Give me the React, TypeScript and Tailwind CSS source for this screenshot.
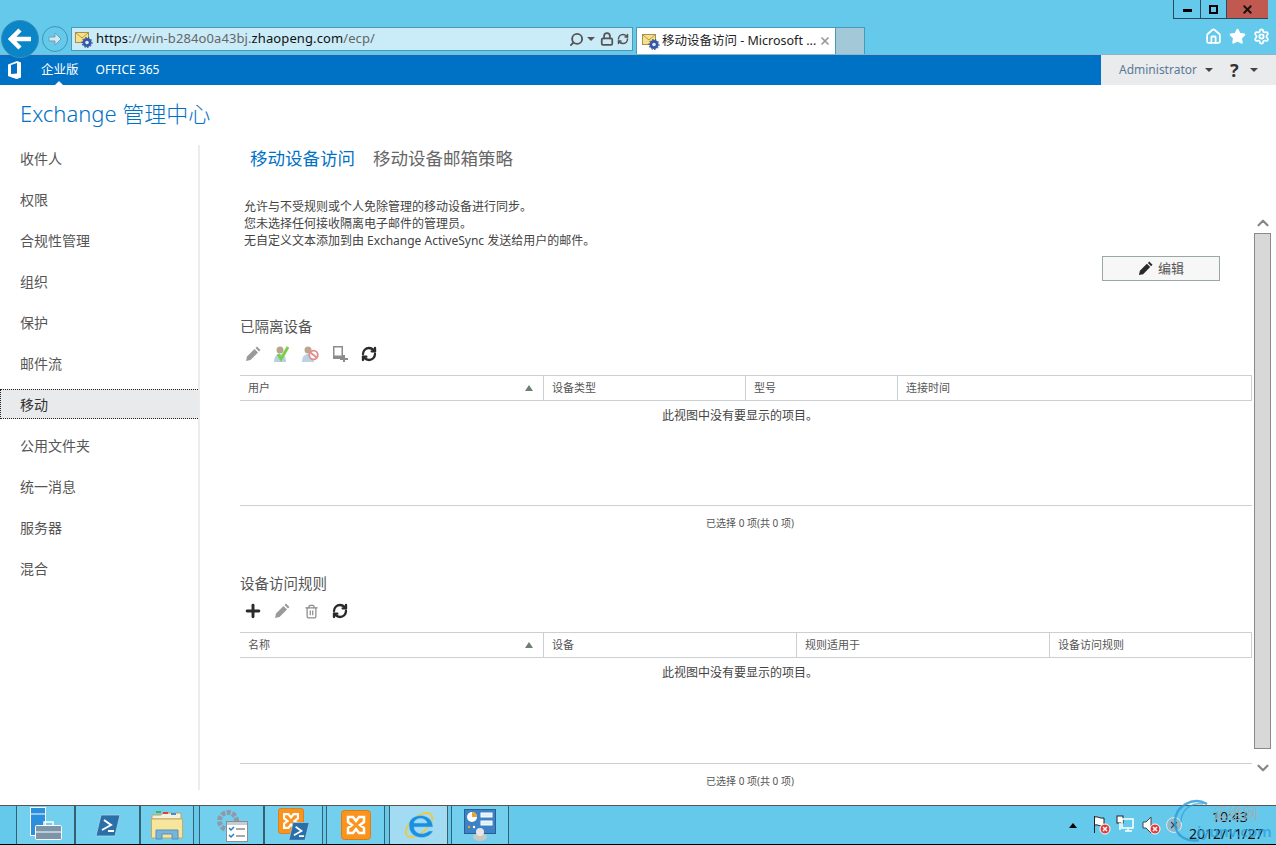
import { ChevronDown, ChevronUp, House, Lock, RefreshCw, Search, Settings, Star, Trash2, X, Plus } from "lucide-react";

const navItems = ["收件人", "权限", "合规性管理", "组织", "保护", "邮件流", "移动", "公用文件夹", "统一消息", "服务器", "混合"];

const Caret = ({ className = "border-t-[#555]" }: { className?: string }) => (
  <span className={`inline-block w-0 h-0 border-x-[4px] border-x-transparent border-t-[4px] ${className}`} />
);

const Pencil = ({ size = 16, color = "#9a9a9a" }: { size?: number; color?: string }) => (
  <svg width={size} height={size} viewBox="0 0 16 16" fill={color}>
    <path d="M1 15l1-4.5 7.5-7.5 3.5 3.5L5.5 14z" />
    <path d="M10.5 2l1.500-1.500 3.500 3.500-1.500 1.500z" />
  </svg>
);

const MailFavicon = () => (
  <svg width="18" height="18" viewBox="0 0 18 18">
    <rect x="0.500" y="2.500" width="13" height="10" fill="#f6e08a" stroke="#a8914a" />
    <path d="M1 3l6 5 6-5" fill="none" stroke="#b89a45" />
    <circle cx="12" cy="12.500" r="4.500" fill="#3458a8" />
    <circle cx="12" cy="12.500" r="1.800" fill="#dfe8fa" />
    <circle cx="12" cy="12.500" r="5" fill="none" stroke="#27407f" strokeWidth="1" strokeDasharray="1.500 1.500" />
  </svg>
);

const ApproveIcon = () => (
  <svg width="18" height="18" viewBox="0 0 18 18">
    <circle cx="7" cy="5" r="3.500" fill="#b9a48f" />
    <path d="M1 17c0-6 3-8 6-8s6 2 6 8z" fill="#b9d0e4" />
    <path d="M5 9l3 5 7-12" fill="none" stroke="#7ccf4a" strokeWidth="3" />
  </svg>
);

const BlockIcon = () => (
  <svg width="18" height="18" viewBox="0 0 18 18">
    <circle cx="6" cy="5" r="3.500" fill="#bba692" />
    <path d="M0 17c0-6 3-8 6-8s6 2 6 8z" fill="#bcd2e6" />
    <circle cx="11.500" cy="10" r="4.300" fill="#fff" stroke="#e58b8b" strokeWidth="1.800" />
    <path d="M8.500 7.500l6 5" stroke="#e58b8b" strokeWidth="1.800" />
  </svg>
);

const DeviceAddIcon = () => (
  <svg width="16" height="16" viewBox="0 0 16 16" fill="#8c8c8c">
    <path d="M1 0h10v13H1zM2.500 1.500v8h7v-8z" fillRule="evenodd" />
    <path d="M11 9h2v3h3v2h-3v2h-2v-2H8v-2h3z" />
  </svg>
);

const OfficeLogo = () => (
  <svg width="16" height="18" viewBox="0 0 16 18" fill="#fff">
    <path d="M1 3.500L10 0l4 1.500v15L10 18l-9-3V3.500zM10 2L4 4v9l6-.5V2z" fillRule="evenodd" />
    <path d="M1 15l9 1.500V18z" />
  </svg>
);

const ServerManagerIcon = () => (
  <svg width="32" height="36" viewBox="0 0 32 36">
    <rect x="0.500" y="0.500" width="15" height="28" fill="#2a8fdc" stroke="#fff" />
    <path d="M1 7h14" stroke="#fff" />
    <rect x="5.500" y="18.500" width="26" height="14" rx="1" fill="#7d95a8" stroke="#fff" />
    <path d="M14 18v-3h9v3" fill="none" stroke="#fff" strokeWidth="1.500" />
    <path d="M6 25h25" stroke="#fff" />
  </svg>
);

const PowerShellIcon = ({ size = 26 }: { size?: number }) => (
  <svg width={size} height={size} viewBox="0 0 26 26">
    <path d="M6 3h19l-5 21H1z" fill="#2a6fa8" stroke="#a7d4ee" strokeWidth="0.800" />
    <path d="M9 8l7 5-9 5M13 19h6" fill="none" stroke="#fff" strokeWidth="2" />
  </svg>
);

const FolderIcon = () => (
  <svg width="32" height="32" viewBox="0 0 32 32">
    <path d="M1 6h9l2-2h18v6H1z" fill="#f3f0de" stroke="#b7a467" />
    <rect x="5" y="2" width="5" height="2" fill="#4cb04c" />
    <rect x="12" y="3" width="5" height="2" fill="#d8443a" />
    <rect x="20" y="4" width="5" height="2" fill="#3c8fd8" />
    <path d="M0.500 10h31v19h-31z" fill="#f7e59d" stroke="#c4ab5f" />
    <path d="M5 30v-9h22v9h-6v-5H11v5z" fill="#76b4dc" stroke="#5d8fb5" />
  </svg>
);

const TasksIcon = () => (
  <svg width="32" height="34" viewBox="0 0 32 34">
    <circle cx="12" cy="13" r="8.500" fill="none" stroke="#8f9aa8" strokeWidth="5" strokeDasharray="4 1.500" />
    <rect x="10.500" y="13.500" width="21" height="20" fill="#fff" stroke="#8e8e8e" />
    <rect x="11" y="14" width="20" height="3" fill="#c7ccd2" />
    <path d="M13 20l2 2 3-3M13 27l2 2 3-3" fill="none" stroke="#1f80c4" strokeWidth="1.500" />
    <path d="M20 21h9M20 28h9" stroke="#555" strokeWidth="1.200" />
  </svg>
);

const ExchangeIcon = ({ size = 30 }: { size?: number }) => (
  <svg width={size} height={size} viewBox="0 0 30 30">
    <rect x="0.500" y="0.500" width="29" height="29" rx="3" fill="#f9941e" stroke="#e07a10" />
    <path d="M7 7h5l3 4 3-4h5v5l-4 3 4 3v5h-5l-3-4-3 4H7v-5l4-3-4-3z" fill="none" stroke="#fff" strokeWidth="2.500" />
  </svg>
);

const ExchangePowerShellIcon = () => (
  <div className="relative w-[32px] h-[34px]">
    <ExchangeIcon size={26} />
    <div className="absolute right-0 bottom-0">
      <PowerShellIcon size={22} />
    </div>
  </div>
);

const IeIcon = () => (
  <svg width="32" height="34" viewBox="0 0 32 34">
    <ellipse cx="16" cy="17" rx="16" ry="8" fill="none" stroke="#f0c93a" strokeWidth="1.800" transform="rotate(-40 16 17)" />
    <path d="M30 19H11c0 6 8 9 15 4h4c-5 10-24 9-24-6C6 5 29 3 30 19zM11 15h13c-1-6-12-6-13 0z" fill="#1c8fe0" stroke="#7fd0f5" strokeWidth="0.600" fillRule="evenodd" />
  </svg>
);

const DashboardIcon = () => (
  <svg width="32" height="32" viewBox="0 0 32 32">
    <rect x="0.500" y="0.500" width="31" height="24" fill="#3d82c4" stroke="#2a5f94" />
    <circle cx="8" cy="8" r="5" fill="#fff" />
    <path d="M8 3a5 5 0 0 1 5 5H8z" fill="#f0a030" />
    <rect x="17" y="4" width="11" height="4" fill="#dfeefa" stroke="#fff" />
    <rect x="17" y="12" width="11" height="4" fill="#dfeefa" stroke="#fff" />
    <circle cx="5" cy="18" r="1.200" fill="#f0a030" />
    <circle cx="10" cy="18" r="1.200" fill="#fff" />
    <ellipse cx="16" cy="28" rx="7" ry="4" fill="#c8c8c8" />
    <circle cx="16" cy="23" r="4" fill="#e6e6e6" />
  </svg>
);

const TrayIcon = ({ kind }: { kind: "flag" | "net" | "sound" }) => (
  <svg width="20" height="20" viewBox="0 0 20 20">
    {kind === "flag" && <path d="M3.500 1v17M4 2c3-1 5 2 9 1v8c-4 1-6-2-9-1" fill="#fff" stroke="#222" />}
    {kind === "net" && (
      <>
        <rect x="1" y="1" width="6" height="7" fill="#fff" stroke="#222" />
        <rect x="6" y="4" width="11" height="9" fill="none" stroke="#fff" strokeWidth="1.500" />
        <path d="M4 8v7M9 16h7M12 13v3" stroke="#fff" strokeWidth="1.500" />
      </>
    )}
    {kind === "sound" && <path d="M2 7h3l5-5v16l-5-5H2z" fill="#fff" stroke="#444" />}
    {kind !== "net" && (
      <>
        <circle cx="14" cy="14" r="5" fill="#e03a3a" stroke="#fff" />
        <path d="M12 12l4 4m0-4l-4 4" stroke="#fff" strokeWidth="1.500" />
      </>
    )}
  </svg>
);

type Column = { label: string; width: string; sort?: boolean };

const DataTable = ({ columns, bodyHeight }: { columns: Column[]; bodyHeight: string }) => (
  <div>
    <div className="flex h-[26px] border-y border-[#cbd0d2]">
      {columns.map((c, i) => (
        <div key={c.label} className={`${c.width} flex items-center justify-between pl-2 pr-[10px] text-[11px] text-[#555] ${i > 0 ? "border-l border-[#cbd0d2]" : ""} ${i === columns.length - 1 ? "border-r" : ""}`}>
          <span>{c.label}</span>
          {c.sort && <span className="w-0 h-0 border-x-[4px] border-x-transparent border-b-[6px] border-b-[#6b7f72]" />}
        </div>
      ))}
    </div>
    <div className={`${bodyHeight} pt-[4px] pr-[12px] text-center text-[12px] leading-[22px] text-[#444]`}>此视图中没有要显示的项目。</div>
    <div className="h-[36px] border-t border-[#cbd0d2] pl-[8px] flex items-center justify-center text-[10px] text-[#555]">已选择 0 项(共 0 项)</div>
  </div>
);

const Toolbar = ({ children }: { children: React.ReactNode }) => (
  <div className="h-[30px] flex items-center gap-[9px] pl-[3px]">{children}</div>
);

const ToolSlot = ({ children }: { children: React.ReactNode }) => (
  <div className="w-[20px] h-[20px] flex items-center justify-center">{children}</div>
);

const TaskItem = ({ width, active, gap, children }: { width: string; active?: boolean; gap: string; children: React.ReactNode }) => (
  <div className={`${width} ${gap} ${active ? "bg-[#a3dcf2]" : "bg-[#72cfee]"} h-full border-x border-[#35606f] flex items-center justify-center`}>{children}</div>
);

export default function App() {
  return (
    <div className="w-[1276px] h-[845px] overflow-hidden flex flex-col bg-white font-['Noto_Sans','Noto_Sans_CJK_SC',sans-serif]">
      {/* browser chrome */}
      <div className="h-[55px] bg-[#65c9eb] border-b border-[#8fb5c4] flex flex-col">
        <div className="h-[20px] flex justify-end pr-[8px]">
          <div className="w-[28px] h-[19px] bg-[#65c9eb] border border-t-0 border-[#2b4a5a] flex items-center justify-center">
            <div className="w-[9px] h-[3px] bg-black mt-[3px]" />
          </div>
          <div className="w-[26px] h-[19px] border-b border-r border-[#2b4a5a] flex items-center justify-center">
            <div className="w-[9px] h-[9px] border-2 border-black" />
          </div>
          <div className="w-[41px] h-[19px] bg-[#c05a50] border-b border-[#2b4a5a] flex items-center justify-center">
            <X size={13} strokeWidth={3.500} color="#111" />
          </div>
        </div>
        <div className="h-[34px] flex items-start relative">
          <div className="ml-[1px] w-[38px] h-[38px] rounded-full bg-[#0a85c7] border border-[#3b8fb3] flex items-center justify-center shrink-0 z-10">
            <svg width="24" height="22" viewBox="0 0 24 22" fill="none" stroke="#fff" strokeWidth="4.500">
              <path d="M12 2L3 11l9 9M3 11h20" />
            </svg>
          </div>
          <div className="ml-[3px] mt-[6px] w-[26px] h-[26px] rounded-full border border-[#3f95b3] flex items-center justify-center shrink-0">
            <svg width="16" height="14" viewBox="0 0 16 14" fill="#cdeaf5" stroke="#6f9fb5">
              <path d="M8 1l6 6-6 6v-4H2V5h6z" />
            </svg>
          </div>
          <div className="ml-[3px] mt-[7px] w-[562px] h-[24px] bg-[#c9ecf8] border border-[#4a9ab5] flex items-center pl-[3px] pr-[3px] shrink-0">
            <MailFavicon />
            <div className="ml-[3px] text-[13px] text-[#666] tracking-[0.100px] whitespace-nowrap">
              <span className="text-[#111]">https</span>://win-b284o0a43bj.<span className="text-[#111]">zhaopeng.com</span>/ecp/
            </div>
            <div className="ml-auto flex items-center gap-[3px] text-[#555]">
              <Search size={15} strokeWidth={3} className="-scale-x-100" />
              <Caret />
              <Lock size={14} strokeWidth={3} className="ml-[2px]" />
              <RefreshCw size={12} strokeWidth={3} />
            </div>
          </div>
          <div className="ml-[3px] mt-[7px] w-[200px] h-[27px] bg-white border-x border-t border-[#4a9ab5] flex items-center pl-[5px] pr-[4px] shrink-0">
            <MailFavicon />
            <span className="ml-[2px] text-[12.500px] text-[#222] whitespace-nowrap">移动设备访问 - Microsoft ...</span>
            <X size={12} strokeWidth={3.500} color="#999" className="ml-auto" />
          </div>
          <div className="mt-[7px] w-[29px] h-[27px] bg-[#a3c9d8] border-r border-t border-[#4a9ab5] shrink-0" />
          <div className="ml-auto mt-[8px] pr-[6px] flex items-center gap-[7px] text-white">
            <House size={17} strokeWidth={2.500} />
            <Star size={17} fill="#fff" />
            <Settings size={17} strokeWidth={2.500} />
          </div>
        </div>
      </div>

      {/* office 365 bar */}
      <div className="h-[30px] bg-[#0072c6] flex items-center text-white">
        <div className="ml-[7px] w-[16px] flex"><OfficeLogo /></div>
        <div className="relative ml-[18px] h-full flex items-center text-[12.500px] whitespace-nowrap">
          企业版
          <span className="absolute left-[14px] bottom-0 w-0 h-0 border-x-[4px] border-x-transparent border-b-[4px] border-b-white" />
        </div>
        <div className="ml-[17px] text-[12px]">OFFICE 365</div>
        <div className="ml-auto w-[175px] h-full bg-[#e9ebed] flex items-center pl-[18px]">
          <span className="text-[12px] text-[#5b7a96]">Administrator</span>
          <Caret className="ml-[8px] border-t-[#444]" />
          <span className="ml-[17px] text-[18px] font-bold text-[#333] leading-none">?</span>
          <Caret className="ml-[11px] border-t-[#444]" />
        </div>
      </div>

      {/* page body */}
      <div className="h-[720px] flex flex-col">
        <div className="h-[58px] pl-[20px] pt-[12px] text-[22px] leading-[32px] font-light text-[#0072c6] whitespace-nowrap">Exchange 管理中心</div>
        <div className="flex-1 flex">
          <nav className="w-[198px] text-[14px] text-[#555]">
            {navItems.map((item) => (
              <div
                key={item}
                className={`h-[30px] mb-[11px] pl-[20px] flex items-center ${item === "移动" ? "w-[200px] bg-[#e8eaec] outline-1 outline-dotted -outline-offset-1 outline-[#222] text-[#333]" : ""}`}
              >
                {item}
              </div>
            ))}
          </nav>
          <div className="w-[2px] h-[645px] mt-[2px] bg-[#ececec]" />

          <main className="w-[1052px] pl-[40px]">
            <div className="h-[30px] pl-[10px] flex items-center gap-[18px] text-[17.500px]">
              <span className="text-[#0072c6]">移动设备访问</span>
              <span className="text-[#666]">移动设备邮箱策略</span>
            </div>
            <div className="mt-[26px] pl-[4px] text-[12px] text-[#444]">
              <div className="h-[16px] flex items-center">允许与不受规则或个人免除管理的移动设备进行同步。</div>
              <div className="h-[17px] flex items-center">您未选择任何接收隔离电子邮件的管理员。</div>
              <div className="h-[18px] flex items-center">无自定义文本添加到由 Exchange ActiveSync 发送给用户的邮件。</div>
            </div>
            <div className="mt-[6px] pr-[32px] flex justify-end">
              <button className="w-[118px] h-[25px] bg-[#f7f7f7] border border-[#9aa7a8] flex items-center justify-center gap-[5px] text-[13px] text-[#555]">
                <Pencil size={15} color="#2a2a2a" />
                编辑
              </button>
            </div>

            <h2 className="mt-[34px] h-[24px] flex items-center text-[14.500px] font-normal text-[#555]">已隔离设备</h2>
            <Toolbar>
              <ToolSlot><Pencil /></ToolSlot>
              <ToolSlot><ApproveIcon /></ToolSlot>
              <ToolSlot><BlockIcon /></ToolSlot>
              <ToolSlot><DeviceAddIcon /></ToolSlot>
              <ToolSlot><RefreshCw size={16} strokeWidth={3.500} color="#2a2a2a" /></ToolSlot>
            </Toolbar>
            <div className="mt-[6px]">
              <DataTable
                bodyHeight="h-[104px]"
                columns={[
                  { label: "用户", width: "w-[303px]", sort: true },
                  { label: "设备类型", width: "w-[202px]" },
                  { label: "型号", width: "w-[152px]" },
                  { label: "连接时间", width: "w-[355px]" },
                ]}
              />
            </div>

            <h2 className="mt-[31px] h-[24px] flex items-center text-[14.500px] font-normal text-[#555]">设备访问规则</h2>
            <Toolbar>
              <ToolSlot><Plus size={20} strokeWidth={3.500} color="#2a2a2a" /></ToolSlot>
              <ToolSlot><Pencil /></ToolSlot>
              <ToolSlot><Trash2 size={15} strokeWidth={2} color="#8c8c8c" /></ToolSlot>
              <ToolSlot><RefreshCw size={16} strokeWidth={3.500} color="#2a2a2a" /></ToolSlot>
            </Toolbar>
            <div className="mt-[6px]">
              <DataTable
                bodyHeight="h-[105px]"
                columns={[
                  { label: "名称", width: "w-[303px]", sort: true },
                  { label: "设备", width: "w-[253px]" },
                  { label: "规则适用于", width: "w-[253px]" },
                  { label: "设备访问规则", width: "w-[203px]" },
                ]}
              />
            </div>
          </main>

          {/* scrollbar */}
          <div className="ml-[2px] w-[17px] pt-[70px] flex flex-col items-center">
            <ChevronUp size={18} strokeWidth={3} color="#888" className="h-[20px]" />
            <div className="w-[17px] h-[516px] bg-[#d8d8d8] border border-[#8a8a8a]" />
            <ChevronDown size={18} strokeWidth={3} color="#888" className="mt-[10px]" />
          </div>
        </div>
      </div>

      {/* taskbar */}
      <div className="relative flex-1 bg-[#65c9eb] border-t border-[#555] border-b border-b-black flex pl-[16px]">
        <TaskItem width="w-[59px]" gap=""><ServerManagerIcon /></TaskItem>
        <TaskItem width="w-[65px]" gap=""><PowerShellIcon /></TaskItem>
        <TaskItem width="w-[54px]" gap=""><FolderIcon /></TaskItem>
        <TaskItem width="w-[65px]" gap="ml-[5px]"><TasksIcon /></TaskItem>
        <TaskItem width="w-[59px]" gap=""><ExchangePowerShellIcon /></TaskItem>
        <TaskItem width="w-[59px]" gap="ml-[3px]"><ExchangeIcon /></TaskItem>
        <TaskItem width="w-[59px]" gap="ml-[4px]" active><IeIcon /></TaskItem>
        <TaskItem width="w-[58px]" gap="ml-[3px]"><DashboardIcon /></TaskItem>

        <div className="ml-auto flex items-center pr-[21px]">
          <span className="w-0 h-0 border-x-[4px] border-x-transparent border-b-[5px] border-b-black mr-[14px]" />
          <div className="flex items-center gap-[5px]">
            <TrayIcon kind="flag" />
            <TrayIcon kind="net" />
            <TrayIcon kind="sound" />
            <div className="w-[16px] h-[16px] rounded-full bg-[#8fb8c8] border border-[#dceaf0] flex items-center justify-center">
              <X size={10} strokeWidth={3} color="#444" />
            </div>
          </div>
          <div className="ml-[7px] w-[66px] text-[14px] leading-[17px] text-[#111] text-center">
            <div className="pl-[16px]">10:43</div>
            <div>2012/11/27</div>
          </div>
        </div>

        {/* watermark */}
        <div className="absolute left-[1173px] -top-[8px] w-[100px] h-[48px] pointer-events-none">
          <svg width="36" height="46" viewBox="0 0 36 46" fill="none" stroke="#2e9fdc">
            <path d="M34 6C20-2 2 8 2 24s14 20 24 18" strokeWidth="2.500" opacity="0.850" />
            <path d="M30 6C18 4 8 12 8 24" strokeWidth="1.500" opacity="0.700" />
          </svg>
          <div className="absolute left-[40px] top-[6px] text-[15px] leading-[18px] text-[#9ab0ba] whitespace-nowrap">运维网</div>
          <div className="absolute left-[24px] top-[24px] text-[15px] leading-[18px] font-semibold text-[#2e9fdc]/80 whitespace-nowrap">iyunv.com</div>
        </div>
      </div>
    </div>
  );
}
